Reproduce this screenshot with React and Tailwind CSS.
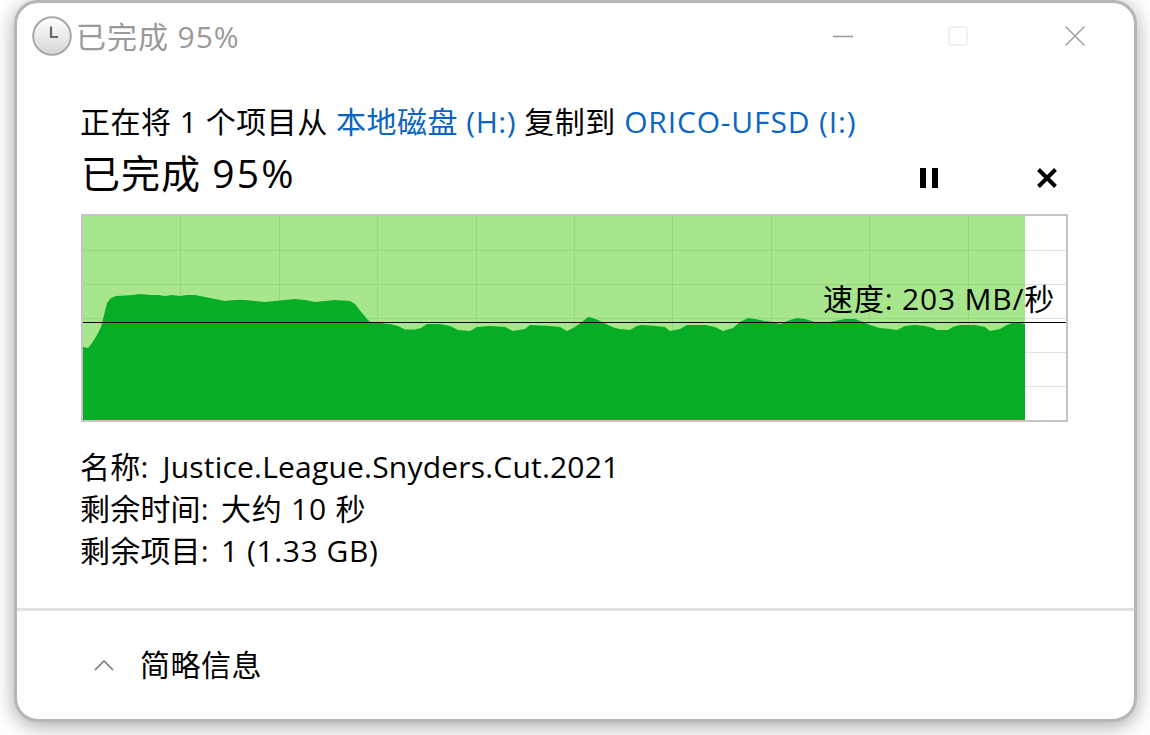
const FONT = '"Open Sans", "Noto Sans CJK SC", sans-serif';

const top = [
  [83,347],[88,348],[92,343],[97,335],[101,327],[104,315],[107,303],[111,298],[116,296],[125,295.5],[133,295],[140,294],[150,295],[158,295],[165,296],[172,295],[180,296],[187,295],[195,295],[205,297],[215,299],[225,301],[235,300],[245,300],[255,301],[265,302],[275,301],[285,300],[295,299],[305,300],[315,302],[325,301],[335,300],[350,301],[355,304],[362,313],[368,320],[372,323],[380,323],[390,324],[398,326],
  [405,329.5],[415,329.5],[421,328],[427,324],[440,324],[450,326],[458,330],[470,331],[477,327],[490,326],[505,327],[513,331],[525,329],[530,325],[550,326],[560,327],[567,331],[575,327],[582,322],[588,317],[593,318],[600,321],[610,326],[615,328],[620,329],[630,330],[637,326],[642,325],[655,326],[665,327],[670,331],[680,329],[687,325],[705,325],[715,327],[723,331],[733,328],
  [740,322],[748,318],[755,319],[765,321],[773,322],[780,324],[790,320],[797,318],[805,319],[815,322],[825,323],[835,321],[845,319],[855,319],[863,322],[870,325],[880,328],[890,329],[897,330],[905,326],[915,325],[925,326],[933,328],[937,330],[948,330],[953,327],[960,325],[975,325],[985,327],[990,331],[1000,329],[1007,325],[1012,323],[1020,323],[1025,324],
];
const area = 'M83,420 ' + top.map(([x, y]) => `L${x},${y}`).join(' ') + ' L1025,420 Z';
const vLines = [180, 279, 377, 476, 574, 672, 771, 869, 968];
const hLines = [250, 284, 352, 386, 318];

function Clock() {
  return (
    <svg width="40" height="40" viewBox="0 0 40 40" className="block">
      <defs>
        <linearGradient id="cg" x1="0" y1="0" x2="0" y2="1">
          <stop offset="0" stopColor="#ffffff" />
          <stop offset="1" stopColor="#d6d6d6" />
        </linearGradient>
      </defs>
      <circle cx="20" cy="20" r="18.8" fill="url(#cg)" stroke="#a8a8a8" strokeWidth="2" />
      <path d="M19 10.5V21H26" fill="none" stroke="#666" strokeWidth="2.2" />
    </svg>
  );
}

function Chart() {
  return (
    <div className="relative w-[987px] h-[208px] border-2 border-[#c4c4c4] bg-white">
      <svg width="983" height="204" viewBox="83 216 983 204" className="block">
        {hLines.map((y) => (
          <line key={y} x1="83" x2="1066" y1={y + 0.5} y2={y + 0.5} stroke="#e2e2e2" />
        ))}
        <rect x="83" y="216" width="942" height="204" fill="#a8e68d" />
        {hLines.map((y) => (
          <line key={y} x1="83" x2="1025" y1={y + 0.5} y2={y + 0.5} stroke="#98d781" />
        ))}
        {vLines.map((x) => (
          <line key={x} x1={x + 0.5} x2={x + 0.5} y1="216" y2="420" stroke="#98d781" />
        ))}
        <path d={area} fill="#06ad25" />
        <line x1="83" x2="1066" y1="322.5" y2="322.5" stroke="#000" />
      </svg>
      <span className="absolute right-[11px] top-[63px] text-[30px] leading-[40px] tracking-[0.8px] text-black whitespace-pre">速度: 203 MB/秒</span>
    </div>
  );
}

export default function App() {
  return (
    <div className="w-[1150px] h-[735px] overflow-hidden bg-white pl-[14px]" style={{ fontFamily: FONT }}>
      <div className="w-[1123px] h-[722px] box-border bg-white rounded-[24px] border-[3px] border-[#b6b6b6] shadow-[0_4px_20px_rgba(0,0,0,0.35)] flex flex-col overflow-hidden">
        <div className="h-[70px] flex items-center shrink-0">
          <div className="ml-[15px] mt-[-4px]"><Clock /></div>
          <span className="ml-[4px] mt-[-2px] text-[30px] leading-[40px] tracking-[0.95px] text-[#9a9a9a] whitespace-pre">已完成 95%</span>
          <div className="ml-auto flex items-center mt-[-4px]">
            <svg width="20" height="20" viewBox="0 0 20 20"><path d="M0 10.5H20" stroke="#999" strokeWidth="1.5" /></svg>
            <svg width="20" height="20" viewBox="0 0 20 20" className="ml-[95px]"><rect x="1" y="1" width="18" height="18" rx="2" fill="none" stroke="#eeeeee" strokeWidth="1.6" /></svg>
            <svg width="20" height="20" viewBox="0 0 20 20" className="ml-[97px] mr-[49px]"><path d="M0.5 0.5L19.5 19.5M19.5 0.5L0.5 19.5" stroke="#a0a0a0" strokeWidth="1.5" /></svg>
          </div>
        </div>
        <div className="pl-[64px] flex flex-col">
          <div className="h-[40px] mt-[29px] -ml-[1px] text-[30px] leading-[40px] tracking-[0.5px] text-black whitespace-pre">
            正在将 1 个项目从 <span className="text-[#0a66c2]">本地磁盘 (H:)</span> 复制到 <span className="text-[#0a66c2] tracking-[0.85px]">ORICO-UFSD (I:)</span>
          </div>
          <div className="h-[66px] flex items-center">
            <span className="text-[39px] leading-[50px] tracking-[1px] -mt-[4px] text-black whitespace-pre">已完成 <span className="tracking-[2.2px]">95%</span></span>
            <svg width="20" height="20" viewBox="0 0 20 20" className="ml-auto mt-[6px]"><path d="M1 0H7V20H1ZM13 0H19V20H13Z" fill="#000" /></svg>
            <svg width="20" height="20" viewBox="0 0 20 20" className="ml-[98px] mr-[77px] mt-[6px]"><path d="M1.5 1.5L18.5 18.5M18.5 1.5L1.5 18.5" stroke="#000" strokeWidth="4" /></svg>
          </div>
          <div className="mt-[6px]"><Chart /></div>
          <div className="mt-[24px] -ml-[1px] flex flex-col text-[30px] leading-[42px] tracking-[0.2px] text-black whitespace-pre">
            <div>名称: <span className="ml-[6px] tracking-[0.2px]">Justice.League.Snyders.Cut.2021</span></div>
            <div>剩余时间: <span className="ml-[4px] tracking-[0.8px]">大约 10 秒</span></div>
            <div>剩余项目: <span className="ml-[4px] tracking-[0.6px]">1 (1.33 GB)</span></div>
          </div>
        </div>
        <div className="mt-[36px] h-[3px] bg-[#e2e2e2] shrink-0" />
        <div className="flex items-center h-[108px] pb-[1px]">
          <svg width="20" height="12" viewBox="0 0 20 12" className="ml-[77px]"><path d="M1 11L10 2L19 11" fill="none" stroke="#777" strokeWidth="1.6" /></svg>
          <span className="ml-[26px] text-[30px] leading-[40px] tracking-[0.5px] text-black">简略信息</span>
        </div>
      </div>
    </div>
  );
}
